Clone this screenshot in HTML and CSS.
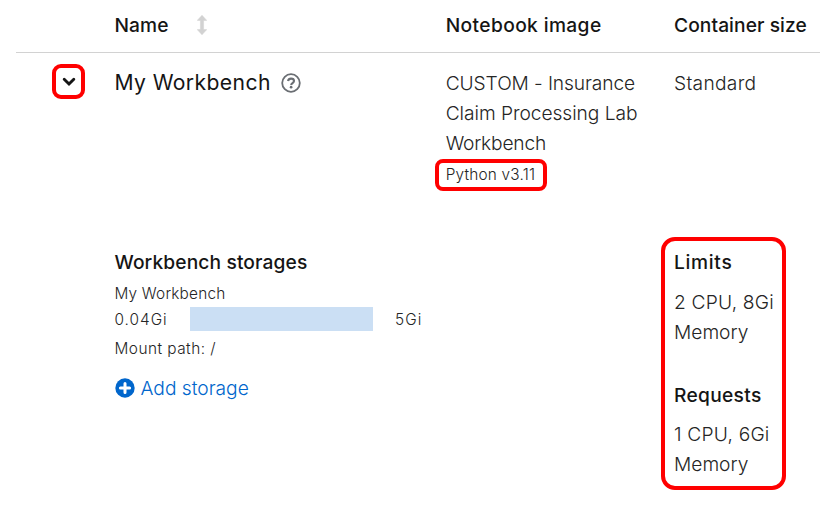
FILE: index.html
```html
<!DOCTYPE html>
<html lang="en">
<head>
<meta charset="utf-8">
<title>Workbenches</title>
<link rel="stylesheet" href="styles.css">
</head>
<body>
<main class="table">
  <div class="row head">
    <div></div>
    <div class="name-head"><span class="t-name">Name</span>
      <svg class="sort" width="10" height="20" viewBox="0 0 10 20"><path d="M5 0.2 9.8 5.4H6.6V14.6H9.8L5 19.8 0.2 14.6H3.4V5.4H0.2Z" fill="#d2d2d2" stroke="#d2d2d2" stroke-width=".5" stroke-linejoin="round"/></svg>
    </div>
    <div class="t-image">Notebook image</div>
    <div class="t-size">Container size</div>
  </div>
  <div class="row main-row">
    <div class="toggle mark">
      <svg width="14" height="10" viewBox="0 0 14 10"><path d="M2.2 2.2 7 7 11.8 2.2" fill="none" stroke="#151515" stroke-width="2.9" stroke-linecap="round"/></svg>
    </div>
    <div class="title"><span class="t-title">My Workbench</span>
      <svg class="help" width="20" height="20" viewBox="0 0 20 20"><circle cx="10" cy="10" r="8.8" fill="none" stroke="#6a6e73" stroke-width="1.8"/><path d="M7 7.9C7.4 6.3 8.5 5.6 10 5.6c1.7 0 3 .9 3 2.4 0 2.1-2.8 2-2.8 3.9" fill="none" stroke="#6a6e73" stroke-width="2.1"/><circle cx="10.1" cy="14.2" r="1.35" fill="#6a6e73"/></svg>
    </div>
    <div class="image">
      <div class="t-custom">CUSTOM - Insurance</div>
      <div class="t-claim">Claim Processing Lab</div>
      <div class="t-wb">Workbench</div>
      <div class="python mark"><span class="small t-python">Python v3.11</span></div>
    </div>
    <div class="t-standard">Standard</div>
  </div>
  <div class="row details">
    <div></div>
    <div class="storage">
      <div class="strong t-storages">Workbench storages</div>
      <div class="small label t-small-wb">My Workbench</div>
      <div class="usage small"><span class="t-used">0.04Gi</span><span class="bar"></span><span class="t-total">5Gi</span></div>
      <div class="small mount t-mount">Mount path: /</div>
      <div class="add"><svg width="20" height="20" viewBox="0 0 20 20"><circle cx="10" cy="10" r="9.7" fill="#06c"/><path d="M10 5.4v9.2M5.4 10h9.2" stroke="#fff" stroke-width="3" stroke-linecap="round"/></svg><span class="t-add">Add storage</span></div>
    </div>
    <div></div>
    <div class="resources mark">
      <div class="strong t-limits">Limits</div>
      <div class="value"><div class="t-cpu2">2 CPU, 8Gi</div><div>Memory</div></div>
      <div class="strong requests t-requests">Requests</div>
      <div class="value value-last"><div class="t-cpu1">1 CPU, 6Gi</div><div>Memory</div></div>
    </div>
  </div>
</main>
</body>
</html>
```
FILE: styles.css
```css
* { box-sizing: border-box; }
body {
  margin: 0;
  background: #fff;
  color: #252525;
  font: 300 19.2px/30px Inter, "Liberation Sans", sans-serif;
  white-space: nowrap;
}
svg { display: block; flex: none; }
.table { margin-left: 16px; }
.row { display: grid; grid-template-columns: 98.5px 331.2px 228.3px 1fr; align-items: start; }
.head { height: 53px; padding-top: 10px; border-bottom: 1px solid #d2d2d2; color: #151515; font-weight: 500; }
.name-head { display: flex; align-items: center; gap: 28px; }
.main-row { height: 184px; padding-top: 15px; }
.mark { border: 4px solid #f00; }
.toggle { display: flex; align-items: center; justify-content: center; width: 33px; height: 35px; margin: -4px 0 0 36px; border-radius: 9px; }
.title { display: flex; align-items: center; gap: 10px; color: #151515; font-size: 21.12px; font-weight: 400; }
.small { font-size: 15.36px; line-height: 24px; }
.python { width: 112px; height: 32px; margin: 1px 0 0 -10.7px; padding-left: 6.7px; border-radius: 8px; display: flex; align-items: center; }
.strong { color: #151515; font-weight: 500; }
.storage { padding-top: 10px; }
.label { margin-top: 5px; }
.usage { display: flex; align-items: center; margin-top: 1px; }
.usage .t-used { width: 75.5px; padding-top: 2px; }
.usage .t-total { padding-top: 2px; }
.usage { height: 24px; }
.bar { width: 183px; height: 24px; margin-right: 22px; background: #cbdff4; }
.mount { margin-top: 6px; }
.add { display: flex; align-items: center; gap: 6px; margin-top: 12px; color: #06c; }
.resources { width: 125px; height: 253px; margin-left: -13px; padding: 6px 0 0 9px; border-radius: 14px; }
.value { margin-top: 10px; }
.requests { margin-top: 33px; }
.value-last { margin-top: 9px; }
.t-name { letter-spacing: .1px; }
.t-image { letter-spacing: .38px; }
.t-size { letter-spacing: .08px; }
.t-title { letter-spacing: .4px; }
.t-custom { letter-spacing: -.1px; }
.t-claim { letter-spacing: -.06px; }
.t-wb { letter-spacing: -.2px; }
.t-standard { letter-spacing: .3px; }
.t-python { letter-spacing: .2px; }
.t-storages { letter-spacing: .12px; }
.t-small-wb { letter-spacing: .2px; }
.t-used { letter-spacing: 1px; }
.t-total { letter-spacing: 1.1px; }
.t-mount { letter-spacing: .48px; }
.t-add { letter-spacing: 0; }
.t-limits { letter-spacing: .7px; }
.t-requests { letter-spacing: .3px; }
.t-cpu2 { letter-spacing: .2px; }
.t-cpu1 { letter-spacing: .2px; }
```
